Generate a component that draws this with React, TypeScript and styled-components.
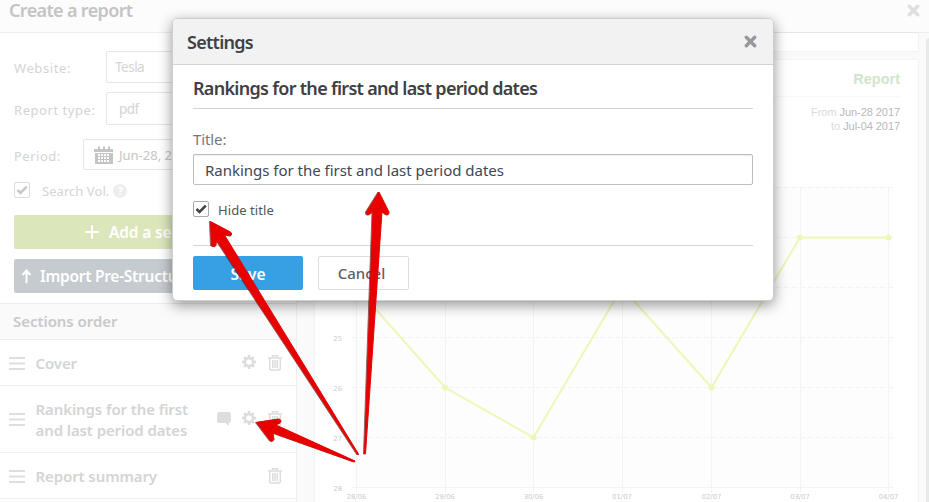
import React from "react";
import styled, { createGlobalStyle } from "styled-components";

const Global = createGlobalStyle`
  *{box-sizing:border-box}
  body{margin:0;background:#fff;overflow:hidden;font-family:"Noto Sans","Open Sans",sans-serif}
  svg{display:block;flex:none}
`;
const Page = styled.div`
  position:relative;width:929px;height:502px;overflow:hidden;display:flex;flex-direction:column;
`;
const TopBar = styled.header`
  height:33px;flex:none;background:#fcfcfc;border-bottom:1px solid #ededed;display:flex;
  justify-content:space-between;padding:0 9px 0 9px;
`;
const Label = styled.span<{ $s: number; $c: string; $w?: number; $ls?: number; $lh?: number; $f?: string }>`
  display:block;white-space:nowrap;font-size:${p => p.$s}px;color:${p => p.$c};font-weight:${p => p.$w ?? 400};
  letter-spacing:${p => p.$ls ?? 0}px;line-height:${p => p.$lh ?? 20}px;
  ${p => p.$f ? `font-family:${p.$f};` : ""}
`;
const TopClose = styled.div`padding-top:4px;`;
const Content = styled.div`flex:1;min-height:0;display:flex;background:#fafafa;`;
const Side = styled.aside`width:297px;flex:none;background:#fff;border-right:1px solid #eeeeee;`;
const Form = styled.div`height:270px;padding:18px 14px 0;display:flex;flex-direction:column;`;
const Field = styled.div<{ $label: number; $h: number; $mb: number }>`
  display:grid;grid-template-columns:${p => p.$label}px 1fr;height:${p => p.$h}px;margin-bottom:${p => p.$mb}px;align-items:center;
`;
const FieldName = styled(Label)`padding-top:2px;`;
const FieldBox = styled.div<{ $pad: number }>`
  height:100%;border:1px solid #e6e6e6;border-radius:2px;padding-left:${p => p.$pad}px;display:flex;align-items:center;gap:5px;
`;
const CheckRow = styled.div<{ $mb: number; $gap: number }>`
  display:flex;align-items:center;gap:${p => p.$gap}px;height:16px;margin-bottom:${p => p.$mb}px;
`;
const Box = styled.span<{ $c: string }>`
  width:16px;height:16px;border:1px solid ${p => p.$c};border-radius:2px;display:grid;place-items:center;flex:none;
`;
const CheckName = styled.div`padding-top:2px;`;
const Help = styled.span`
  width:14px;height:14px;margin:2px 0 0 -8px;border-radius:50%;background:#eee;color:#fff;font-size:10px;font-weight:700;
  line-height:14px;text-align:center;
`;
const SideButton = styled.div<{ $bg: string; $pad: number; $gap: number }>`
  height:34px;flex:none;margin-bottom:10px;border-radius:2px;background:${p => p.$bg};display:flex;align-items:center;
  padding-left:${p => p.$pad}px;gap:${p => p.$gap}px;overflow:hidden;
`;
const OrderHead = styled.div`
  height:37px;background:#fafafa;border-top:1px solid #ececec;border-bottom:1px solid #eeeeee;padding:7px 13px 0;
`;
const Item = styled.div<{ $h: number }>`
  height:${p => p.$h}px;border-bottom:1px solid #f0f0f0;display:flex;align-items:center;padding:0 14px 0 9px;
`;
const ItemName = styled.div`flex:1;padding:1px 0 0 9.5px;`;
const ItemIcons = styled.div`display:flex;align-items:center;gap:11px;`;
const Preview = styled.main`width:603px;margin-left:18px;display:flex;flex-direction:column;gap:9px;`;
const Sheet = styled.section<{ $h: number }>`
  height:${p => p.$h}px;flex:none;background:#fff;box-shadow:0 0 2px rgba(0,0,0,.09);padding:0 18px;overflow:hidden;
`;
const SheetTitle = styled.div`height:37px;border-bottom:1px solid #f8f8f8;text-align:right;padding-top:9px;`;
const Dates = styled.div`
  height:83px;padding-top:8px;display:flex;flex-direction:column;align-items:flex-end;
`;
const DateLine = styled.span`
  font:11px/14px "Liberation Sans",sans-serif;letter-spacing:-.06px;color:#b9b9b9;white-space:nowrap;
`;
const DateWord = styled.span`color:#dadada;`;
const ChartWrap = styled.div`width:600px;margin-left:-18px;`;
const Scroll = styled.div`width:3px;margin:5px 0 0 8px;background:#e8eaea;border-radius:3px 0 0 0;`;

const Dialog = styled.div`
  position:absolute;left:172px;top:18px;width:602px;height:283px;border:1px solid #cecece;border-radius:5px;background:#fff;
  box-shadow:0 4px 14px rgba(0,0,0,.42);overflow:hidden;display:flex;flex-direction:column;
`;
const DialogHead = styled.div`
  height:46px;flex:none;background:#f2f2f2;border-bottom:1px solid #d2d2d2;display:flex;justify-content:space-between;
  align-items:center;padding:0 16px 0 14px;
`;
const DialogBody = styled.div`padding:0 20px;display:flex;flex-direction:column;`;
const DialogTitle = styled.div`height:44px;border-bottom:1px solid #d5d5d5;padding-top:13px;margin-bottom:20px;`;
const Input = styled.div`
  height:31px;margin:5px 0 16px;border:1px solid #bdbdbd;border-radius:2px;padding-left:11px;display:flex;align-items:center;
  box-shadow:inset 0 1px 1px rgba(0,0,0,.07);
`;
const Footer = styled.div`border-top:1px solid #d5d5d5;padding-top:10px;display:flex;gap:15px;`;
const Button = styled.div<{ $w: number; $primary?: boolean }>`
  width:${p => p.$w}px;height:34px;border-radius:2px;display:flex;justify-content:center;padding-top:${p => p.$primary ? 8 : 6}px;
  padding-right:${p => p.$primary ? 0 : 4}px;
  background:${p => p.$primary ? "#379fe3" : "#fff"};border:${p => p.$primary ? "0" : "1px solid #dedede"};
`;
const Overlay = styled.svg`
  position:absolute;left:0;top:0;pointer-events:none;
  g{filter:drop-shadow(-.4px .5px .4px rgba(70,0,0,.6))}
`;

const Cross = ({ c }: { c: string }) => (
  <svg width="13" height="13" viewBox="0 0 13 13"><path d="M2.300 2.300 10.700 10.700M10.700 2.300 2.300 10.700" stroke={c} strokeWidth="3.400" strokeLinecap="round" /></svg>
);
const Tick = ({ c }: { c: string }) => (
  <svg width="12" height="10" viewBox="0 0 12 10"><path d="M1.500 5 4.500 7.900 10.800 1.600" fill="none" stroke={c} strokeWidth="2.600" /></svg>
);
const Calendar = () => (
  <svg width="20" height="20" viewBox="0 0 20 20">
    <path fill="#c4c4c4" d="M0 4h4V1.500h2V4h3V1.500h2V4h3V1.500h2V4h3v3H0zM1 8h18v11H1z" />
    <path fill="#fff" d="M4 9h2v2H4zm3 0h2v2H7zm3 0h2v2h-2zm3 0h2v2h-2zM4 12h2v2H4zm3 0h2v2H7zm3 0h2v2h-2zm3 0h2v2h-2zM4 15h2v2H4zm3 0h2v2H7zm3 0h2v2h-2zm3 0h2v2h-2z" />
  </svg>
);
const Grip = () => <svg width="17" height="14"><path d="M0 2h16M0 7.500h16M0 13h16" stroke="#dedede" strokeWidth="2" /></svg>;
const Gear = () => (
  <svg width="15" height="16" viewBox="0 0 15 16">
    <g transform="translate(7 7)" stroke="#dcdcdc" fill="none">
      <circle r="4" strokeWidth="2.400" />
      <path strokeWidth="2.400" d="M0-4.500V-7M0 4.500V7M-4.500 0H-7M4.500 0H7M3.200-3.200 4.900-4.900M-3.200-3.200-4.900-4.900M3.200 3.200 4.900 4.900M-3.200 3.200-4.900 4.900" />
    </g>
  </svg>
);
const Trash = () => (
  <svg width="14" height="16" viewBox="0 0 14 16">
    <path d="M4.500 2V.700h5V2M0 3h14M1.700 4v9.500q0 1.500 1.500 1.500h7.600q1.500 0 1.500-1.500V4M4.800 5v8M7 5v8M9.200 5v8" fill="none" stroke="#dcdcdc" strokeWidth="1.500" />
  </svg>
);
const Bubble = () => (
  <svg width="14" height="16" viewBox="0 0 14 16"><path fill="#dedede" d="M2 1h10q2 0 2 2v7q0 2-2 2v3l-3.500-3H2q-2 0-2-2V3q0-2 2-2z" /></svg>
);

const xs = [41.5, 130, 218.5, 307, 396.5, 485, 573.5];
const ys = [7.5, 57.5, 107.5, 157.5, 207.5, 257.5, 307.5];
const ranks = [24, 26, 27, 24, 26, 23, 23];
const days = ["28/06", "29/06", "30/06", "01/07", "02/07", "03/07", "04/07"];
const Chart = () => (
  <svg width="600" height="322" fontFamily="DejaVu Sans" fontSize="6.8" fill="#cbcbcb">
    <rect x="37" y="7" width="541" height="301" fill="#fdfdfd" />
    {ys.map((y, i) => (
      <g key={y}>
        <path d={`M37 ${y}H578`} stroke="#f3f3f3" strokeDasharray={i < 6 ? "6 2" : undefined} />
        <text x="27" y={y + 3} textAnchor="end">{22 + i}</text>
      </g>
    ))}
    {xs.map((x, i) => (
      <g key={x}>
        <path d={`M${Math.floor(x) + 0.5} 7V312`} stroke="#f3f3f3" />
        <text x={x} y="319" textAnchor="middle">{days[i]}</text>
      </g>
    ))}
    <polyline fill="none" stroke="#ebf8b8" strokeWidth="2" points={xs.map((x, i) => `${x},${ys[ranks[i] - 22]}`).join(" ")} />
    {xs.map((x, i) => <circle key={x} cx={x} cy={ys[ranks[i] - 22]} r="3" fill="#ebf8b8" />)}
  </svg>
);

const Arrows = () => (
  <Overlay width="929" height="502">
    <g fill="#e80000" stroke="#e80000" strokeWidth="1" strokeLinejoin="round">
      <path d="M210.500 221.500 230.500 232Q233 234 230.500 236L224.500 235 358.500 454 358 455 216.500 240 216 245.500Q214 248 211.500 245.500Z" />
      <path d="M379 192 389 212Q389 216 386 214.500L382 211.500 365.500 454H364.500L373 211.500 369.500 214.500Q366 216 366.500 212Z" />
      <path d="M256.500 422.500 279.500 419Q282.500 421 280 423L276 425 355 461 354.500 462 273 433 274 439.500Q273 442 270.500 441Z" />
    </g>
  </Overlay>
);

export default function App() {
  const g = "#d4d4d4";
  return (
    <Page>
      <Global />
      <TopBar>
        <Label $s={18} $c="#c4c4c4" $w={600} $ls={-.65} $lh={20}>Create a report</Label>
        <TopClose><Cross c="#dfdfdf" /></TopClose>
      </TopBar>
      <Content>
        <Side>
          <Form>
            <Field $label={92} $h={32} $mb={9}>
              <FieldName $s={13} $c={g} $ls={.6}>Website:</FieldName>
              <FieldBox $pad={8}><Label $s={13.5} $c={g} $ls={-.5}>Tesla</Label></FieldBox>
            </Field>
            <Field $label={92} $h={33} $mb={14}>
              <FieldName $s={13} $c={g} $ls={.55}>Report type:</FieldName>
              <FieldBox $pad={12}><Label $s={13.5} $c={g} $ls={-.5}>pdf</Label></FieldBox>
            </Field>
            <Field $label={69} $h={31} $mb={12}>
              <FieldName $s={13} $c={g} $ls={.5}>Period:</FieldName>
              <FieldBox $pad={10}><Calendar /><Label $s={13} $c="#c6c6c6">Jun-28, 2017</Label></FieldBox>
            </Field>
            <CheckRow $mb={17} $gap={12}>
              <Box $c="#ddd"><Tick c="#c9c9c9" /></Box>
              <CheckName><Label $s={13} $c={g} $ls={.05}>Search Vol.</Label></CheckName><Help>?</Help>
            </CheckRow>
            <SideButton $bg="#dbe7bb" $pad={71} $gap={10}>
              <svg width="14" height="14"><path d="M7 0v14M0 7h14" stroke="#fff" strokeWidth="2" /></svg>
              <Label $s={15.5} $c="#fff" $w={600} $ls={-.15}>Add a section</Label>
            </SideButton>
            <SideButton $bg="#c6cbd0" $pad={7} $gap={8}>
              <svg width="11" height="14"><path d="M5.500 14V2M1.500 6 5.500 1.500 9.500 6" fill="none" stroke="#fff" strokeWidth="2" /></svg>
              <Label $s={15.5} $c="#fff" $w={600} $ls={-.28}>Import Pre-Structured</Label>
            </SideButton>
          </Form>
          <OrderHead><Label $s={15} $c="#c9c9c9" $w={600} $ls={-.05}>Sections order</Label></OrderHead>
          <Item $h={46}>
            <Grip /><ItemName><Label $s={15} $c={g} $w={600} $ls={-.1}>Cover</Label></ItemName>
            <ItemIcons><Gear /><Trash /></ItemIcons>
          </Item>
          <Item $h={67}>
            <Grip /><ItemName><Label $s={15} $c={g} $w={600} $lh={21} $ls={-.1}>Rankings for the first<br />and last period dates</Label></ItemName>
            <ItemIcons><Bubble /><Gear /><Trash /></ItemIcons>
          </Item>
          <Item $h={46}>
            <Grip /><ItemName><Label $s={15} $c={g} $w={600} $ls={-.1}>Report summary</Label></ItemName>
            <ItemIcons><Trash /></ItemIcons>
          </Item>
        </Side>
        <Preview>
          <Sheet $h={18} />
          <Sheet $h={450}>
            <SheetTitle><Label $s={14.5} $c="#cfe6cb" $w={700} $f={'"Liberation Sans",sans-serif'}>Report</Label></SheetTitle>
            <Dates>
              <DateLine><DateWord>From</DateWord> Jun-28 2017</DateLine>
              <DateLine><DateWord>to</DateWord> Jul-04 2017</DateLine>
            </Dates>
            <ChartWrap><Chart /></ChartWrap>
          </Sheet>
        </Preview>
        <Scroll />
      </Content>
      <Dialog>
        <DialogHead><Label $s={18} $c="#3e4146" $w={600} $ls={-.72}>Settings</Label><Cross c="#95999d" /></DialogHead>
        <DialogBody>
          <DialogTitle><Label $s={18} $c="#3e4044" $w={600} $ls={-.7}>Rankings for the first and last period dates</Label></DialogTitle>
          <Label $s={15} $c="#777" $ls={-.1}>Title:</Label>
          <Input><Label $s={15} $c="#3d4855" $ls={-.02}>Rankings for the first and last period dates</Label></Input>
          <CheckRow $mb={28} $gap={9}><Box $c="#aaa"><Tick c="#444" /></Box><CheckName><Label $s={13} $c="#555" $ls={.08}>Hide title</Label></CheckName></CheckRow>
          <Footer>
            <Button $w={110} $primary><Label $s={15.5} $c="#fff" $w={600}>Save</Label></Button>
            <Button $w={91}><Label $s={15} $c="#5c6066" $w={500}>Cancel</Label></Button>
          </Footer>
        </DialogBody>
      </Dialog>
      <Arrows />
    </Page>
  );
}
